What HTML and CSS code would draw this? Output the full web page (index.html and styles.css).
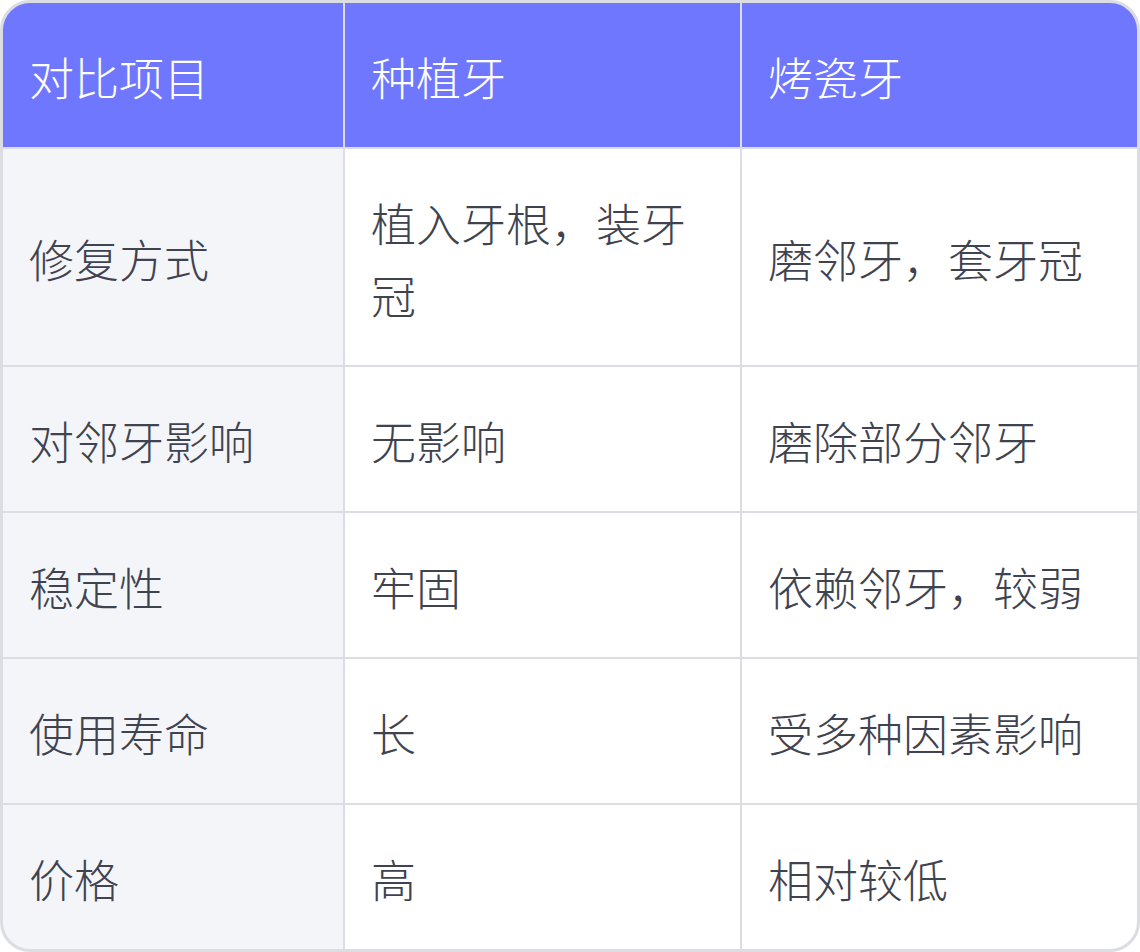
FILE: index.html
```html
<!DOCTYPE html>
<html lang="zh-CN">
<head>
<meta charset="utf-8">
<title>种植牙与烤瓷牙对比</title>
<link rel="stylesheet" href="styles.css">
</head>
<body>
<div class="table" role="table">
  <div class="cell head">对比项目</div>
  <div class="cell head">种植牙</div>
  <div class="cell head">烤瓷牙</div>

  <div class="cell label">修复方式</div>
  <div class="cell">植入牙根，装牙冠</div>
  <div class="cell">磨邻牙，套牙冠</div>

  <div class="cell label">对邻牙影响</div>
  <div class="cell">无影响</div>
  <div class="cell">磨除部分邻牙</div>

  <div class="cell label">稳定性</div>
  <div class="cell">牢固</div>
  <div class="cell">依赖邻牙，较弱</div>

  <div class="cell label">使用寿命</div>
  <div class="cell">长</div>
  <div class="cell">受多种因素影响</div>

  <div class="cell label">价格</div>
  <div class="cell">高</div>
  <div class="cell">相对较低</div>
</div>
</body>
</html>
```

FILE: styles.css
```css
html, body {
  margin: 0;
  padding: 0;
  background: #ffffff;
}

body {
  font-family: "Noto Sans CJK SC", "Noto Sans", sans-serif;
}

.table {
  width: 1140px;
  height: 952px;
  box-sizing: border-box;
  border: 3px solid #dcdde2;
  border-radius: 30px;
  overflow: hidden;
  background: #dcdde2;
  display: grid;
  grid-template-columns: 340px 395px 395px;
  grid-template-rows: 144px 216px 144px 144px 144px 144px;
  gap: 2px;
}

.cell {
  background: #ffffff;
  color: #3f4350;
  font-size: 45px;
  font-weight: 300;
  line-height: 72px;
  padding: 38px 26px 34px 26px;
  display: flex;
  align-items: center;
}

.cell.head {
  background: #7077ff;
  color: #ffffff;
}

.cell.label {
  background: #f4f5f9;
}
```
